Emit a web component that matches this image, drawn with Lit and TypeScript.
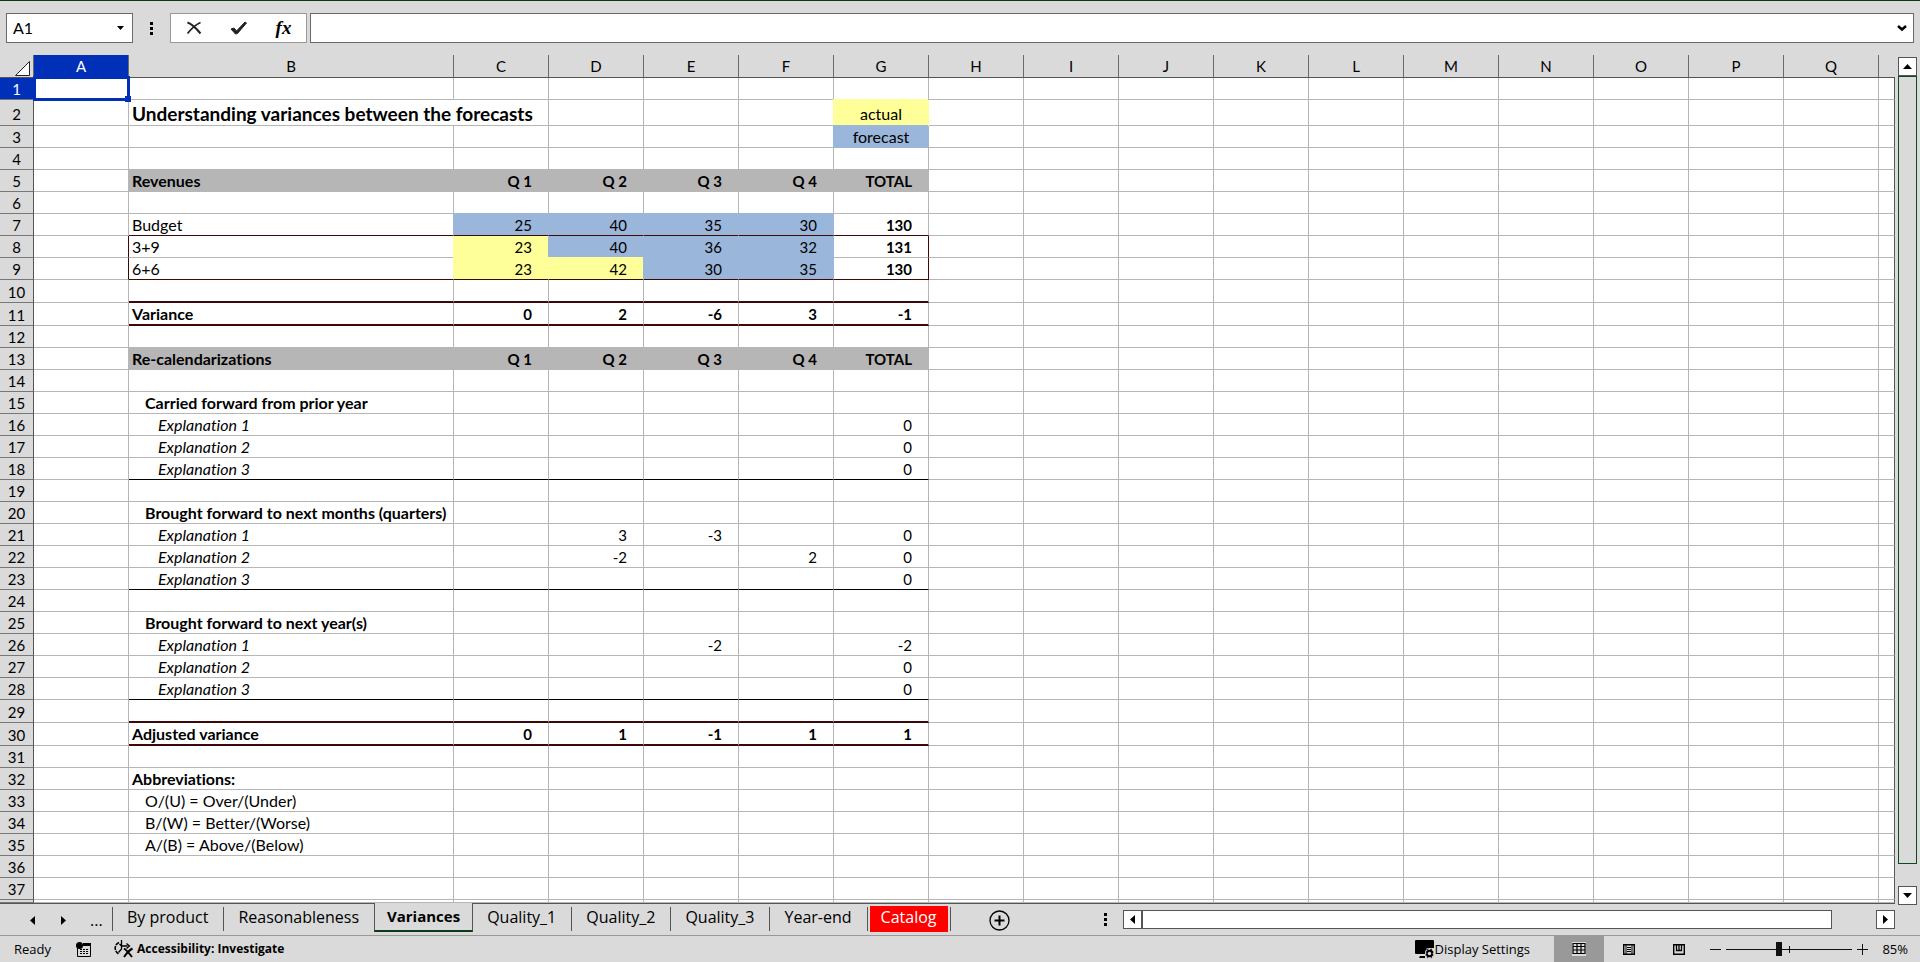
import { LitElement, html, css, svg, nothing } from "lit";
import { customElement, state } from "lit/decorators.js";
import { classMap } from "lit/directives/class-map.js";

type Kind = "head" | "bold" | "sub" | "item" | "title" | "text" | "plain";

interface Row {
  kind?: Kind;
  label?: string;
  /** Values of columns C to G. */
  values?: (string | number)[];
  /** One letter per column C to G: y = actual, b = forecast. */
  fill?: string;
  /** Rule drawn under columns B to G. */
  rule?: "frame" | "thin" | "thick";
  boxed?: boolean;
}

const QUARTERS = ["Q 1", "Q 2", "Q 3", "Q 4", "TOTAL"];

const ROWS: Row[] = [
  {},
  { kind: "title", label: "Understanding variances between the forecasts", values: ["", "", "", "", "actual"], fill: "    y" },
  { values: ["", "", "", "", "forecast"], fill: "    b" },
  {},
  { kind: "head", label: "Revenues", values: QUARTERS },
  {},
  { kind: "text", label: "Budget", values: [25, 40, 35, 30, 130], fill: "bbbb ", rule: "frame" },
  { kind: "text", label: "3+9", values: [23, 40, 36, 32, 131], fill: "ybbb ", boxed: true },
  { kind: "text", label: "6+6", values: [23, 42, 30, 35, 130], fill: "yybb ", boxed: true, rule: "frame" },
  { rule: "thick" },
  { kind: "bold", label: "Variance", values: [0, 2, -6, 3, -1], rule: "thick" },
  {},
  { kind: "head", label: "Re-calendarizations", values: QUARTERS },
  {},
  { kind: "sub", label: "Carried forward from prior year" },
  { kind: "item", label: "Explanation 1", values: ["", "", "", "", 0] },
  { kind: "item", label: "Explanation 2", values: ["", "", "", "", 0] },
  { kind: "item", label: "Explanation 3", values: ["", "", "", "", 0], rule: "thin" },
  {},
  { kind: "sub", label: "Brought forward to next months (quarters)" },
  { kind: "item", label: "Explanation 1", values: ["", 3, -3, "", 0] },
  { kind: "item", label: "Explanation 2", values: ["", -2, "", 2, 0] },
  { kind: "item", label: "Explanation 3", values: ["", "", "", "", 0], rule: "thin" },
  {},
  { kind: "sub", label: "Brought forward to next year(s)" },
  { kind: "item", label: "Explanation 1", values: ["", "", -2, "", -2] },
  { kind: "item", label: "Explanation 2", values: ["", "", "", "", 0] },
  { kind: "item", label: "Explanation 3", values: ["", "", "", "", 0], rule: "thin" },
  { rule: "thick" },
  { kind: "bold", label: "Adjusted variance", values: [0, 1, -1, 1, 1], rule: "thick" },
  {},
  { kind: "bold", label: "Abbreviations:" },
  { kind: "plain", label: "O/(U) = Over/(Under)" },
  { kind: "plain", label: "B/(W) = Better/(Worse)" },
  { kind: "plain", label: "A/(B) = Above/(Below)" },
  {},
  {},
];

const LETTERS = "ABCDEFGHIJKLMNOPQ".split("");
const REST = Array.from({ length: 11 });

const TABS = ["By product", "Reasonableness", "Variances", "Quality_1", "Quality_2", "Quality_3", "Year-end", "Catalog"];

const arrow = (d: string) => html`<svg width="9" height="9" viewBox="0 0 9 9" aria-hidden="true"><path d=${d} /></svg>`;
const UP = "M0 7h9L4.500 2z";
const DOWN = "M0 2h9L4.500 7z";
const LEFT = "M7 0v9L2 4.500z";
const RIGHT = "M2 0v9l5-4.500z";

@customElement("sheet-grid")
class SheetGrid extends LitElement {
  static styles = css`
    :host { display: block; flex: 1; min-width: 0; overflow: hidden; }
    .sheet {
      width: 100%; height: 100%; table-layout: fixed; border-collapse: separate; border-spacing: 0;
      font: 15px/20px "Lato", "Liberation Sans", sans-serif; color: #000; font-variant-ligatures: none;
    }
    .c-num { width: 34px; }
    .c-std { width: 95px; }
    .c-label { width: 325px; }
    .sheet td, .sheet th { box-sizing: border-box; padding: 1px 0 0; overflow: visible; white-space: nowrap; font-weight: 400; text-align: center; }
    .sheet thead tr { height: 23px; }
    .sheet thead th { padding: 0; border-right: 1px solid #6a6a6a; border-bottom: 1px solid #555; background: #dadada; }
    .sheet thead th.edge { border-right: 0; }
    .sheet thead th.corner { text-align: right; padding: 0; }
    .corner svg { display: block; margin: 4px 2px 0 auto; }
    .row { height: 22px; }
    .row.tall { height: 26px; }
    .row.ruled { height: 23px; }
    .row.rest { height: auto; }
    .row th { background: #dadada; border-right: 1px solid #555; border-bottom: 1px solid #777; }
    .row td { background: #fff; border-right: 1px solid #b6b6b6; border-bottom: 1px solid #b6b6b6; text-align: right; padding-right: 16px; }
    .row td.last { border-right-color: #555; }
    .row td.label { text-align: left; padding-right: 0; padding-left: 3px; font-size: 16px; }
    .row td.label.in1 { padding-left: 16px; }
    .row td.label.in2 { padding-left: 29px; font-style: italic; }
    .row td.strong { font-weight: 700; }
    .row td.label.title { font-size: 19px; font-weight: 700; }
    .row td.legend { text-align: center; padding-right: 0; font-size: 16px; }
    .row.tall th, .row.tall td { padding-top: 3px; }
    .row td.head { background: #b6b6b6; box-shadow: -1px -1px #b6b6b6; font-weight: 700; }
    .row td.yellow { background: #ffff99; border-color: #ffff99; box-shadow: -1px -1px #ffff99; }
    .row td.blue { background: #9ab6da; border-color: #9ab6da; box-shadow: -1px -1px #9ab6da; }
    .row td.under.yellow { box-shadow: -1px 0 #ffff99; }
    .row td.under.blue { box-shadow: -1px 0 #9ab6da; }
    .row td.frame { border-bottom-color: #3c0808; }
    .row td.thin { border-bottom-color: #000; }
    .row td.thick { border-bottom: 2px solid #3c0808; }
    .row td.side { border-right-color: #3c0808; }
    .sheet .active { background: #0030b8; color: #fff; }
    .row td.cursor { position: relative; }
    .cursor .ring { position: absolute; inset: -2px -2px -2px -1px; border: 3px solid #0030b8; }
    .cursor .ring::after { content: ""; position: absolute; right: -4px; bottom: -4px; width: 6px; height: 6px; background: #0030b8; }
  `;

  private renderRow(row: Row, i: number) {
    const n = i + 1;
    const values = row.values ?? ["", "", "", "", ""];
    const rule = row.rule ?? "";
    const title = row.kind === "title";
    const head = row.kind === "head";
    const labelClasses = {
      label: true,
      title,
      head,
      strong: row.kind === "bold" || row.kind === "sub",
      in1: row.kind === "sub" || row.kind === "plain",
      in2: row.kind === "item",
      frame: rule === "frame",
      thin: rule === "thin",
      thick: rule === "thick",
    };
    return html`
      <tr class=${classMap({ row: true, tall: title, ruled: n === 10 || n === 11 || n === 29 || n === 30 })}>
        <th scope="row" class=${n === 1 ? "active" : ""}>${n}</th>
        <td class=${classMap({ side: !!row.boxed, cursor: n === 1 })}>${n === 1 ? html`<span class="ring"></span>` : nothing}</td>
        <td class=${classMap(labelClasses)} colspan=${title ? 2 : 1}>${row.label ?? ""}</td>
        ${values.map((v, c) => {
          if (title && c === 0) return nothing;
          const f = row.fill?.[c];
          return html`<td class=${classMap({
            head,
            yellow: f === "y",
            blue: f === "b",
            under: n === 8,
            legend: n < 4,
            strong: row.kind === "bold" || (c === 4 && row.kind === "text"),
            side: !!row.boxed && c === 4,
            frame: rule === "frame",
            thin: rule === "thin",
            thick: rule === "thick",
          })}>${v}</td>`;
        })}
        ${REST.map((_, c) => html`<td class=${c === 10 ? "last" : ""}></td>`)}
      </tr>`;
  }

  render() {
    return html`
      <table class="sheet">
        <colgroup>
          <col class="c-num" /><col class="c-std" /><col class="c-label" />
          ${Array.from({ length: 15 }, () => html`<col class="c-std" />`)}
          <col />
        </colgroup>
        <thead>
          <tr>
            <th class="corner"><svg width="17" height="17" viewBox="0 0 17 17" aria-hidden="true"><path d="M15.500 1.500v14h-14z" fill="#fff" stroke="#222" /></svg></th>
            ${LETTERS.map((l) => html`<th scope="col" class=${l === "A" ? "active" : ""}>${l}</th>`)}
            <th class="edge"></th>
          </tr>
        </thead>
        <tbody>
          ${ROWS.map((r, i) => this.renderRow(r, i))}
          <tr class="row rest">
            <th></th><td></td><td></td>
            ${Array.from({ length: 16 }, (_, c) => html`<td class=${c === 15 ? "last" : ""}></td>`)}
          </tr>
        </tbody>
      </table>`;
  }
}

@customElement("app-root")
class AppRoot extends LitElement {
  @state() private tab = "Variances";

  static styles = css`
    :host {
      display: flex; flex-direction: column; height: 100vh; box-sizing: border-box; overflow: hidden;
      border-top: 1px solid #0c3a18; background: #dadada; color: #000;
      font: 13px/18px "Open Sans", "Noto Sans", sans-serif;
    }
    button { font: inherit; color: inherit; background: none; border: 0; padding: 0; margin: 0; display: flex; align-items: center; justify-content: center; }
    input { font: inherit; color: inherit; }
    svg { display: block; flex: none; }

    .formula { display: flex; height: 30px; padding: 12px 6px; gap: 3px; }
    .field { display: flex; box-sizing: border-box; background: #fff; border: 1px solid #6a6a6a; }
    .field input { flex: 1; min-width: 0; border: 0; outline: 0; background: none; padding: 0 6px; font: 16px/20px "Lato", sans-serif; }
    .field button { width: 22px; }
    .name { width: 127px; }
    .name button { width: 24px; }
    .bar { flex: 1; }
    .grip { display: flex; align-items: center; justify-content: center; width: 31px; }
    .tools { display: flex; box-sizing: border-box; width: 137px; background: #fff; border: 1px solid #999; }
    .tools button { flex: 1; }
    .fx { font: italic 700 19px/20px "Liberation Serif", serif; }

    .main { display: flex; flex: 1; min-height: 0; gap: 3px; padding-right: 3px; }
    .vscroll { display: flex; flex-direction: column; width: 19px; padding-top: 2px; }
    .arrow { box-sizing: border-box; width: 19px; height: 19px; background: #fff; border: 1px solid #555; }
    .vthumb { box-sizing: border-box; flex: 1; border: 1px solid #0e4a1e; }
    .vscroll .arrow.end { margin: 22px 0 -2px; }

    .tabbar { display: flex; box-sizing: border-box; height: 32px; margin-right: 25px; border-top: 1px solid #555; font-size: 16px; line-height: 24px; }
    .nav { display: flex; width: 112px; padding-left: 28px; box-sizing: border-box; align-items: center; gap: 22px; }
    .nav button { padding-top: 2px; }
    .tabs { display: flex; }
    .tab { box-sizing: border-box; height: 24px; margin-top: 3px; padding: 0 15px 4px 14px; border-left: 1px solid #555; }
    .tab.on { height: 29px; margin-top: -1px; padding: 0 12px 2px; font-weight: 700; font-size: 15px; border-right: 1px solid #555; border-bottom: 2px solid #0c3a18; background: #dadada; }
    .tab.on + .tab { border-left: 0; }
    .tab.red { padding: 0 2px; border-right: 1px solid #555; color: #fff; }
    .tab.red .chip { height: 26px; line-height: 22px; padding: 0 11px; background: #f00; }
    .add { margin: 2px 0 0 38px; align-self: center; }
    .hscroll { display: flex; width: 42%; margin-left: auto; padding-top: 6px; }
    .dots { display: flex; width: 24px; height: 19px; padding-right: 12px; box-sizing: border-box; align-items: center; justify-content: center; }
    .hthumb { box-sizing: border-box; flex: 1; height: 19px; background: #fff; border: 1px solid #555; }
    .hscroll .arrow.end { margin-left: 44px; }

    .status { display: flex; box-sizing: border-box; height: 27px; border-top: 1px solid #999; padding: 0 12px 0 14px; align-items: stretch; }
    .status > * { align-self: center; }
    .macro { margin-left: 25px; }
    .access { margin-left: 23px; font-weight: 700; font-size: 12px; gap: 3px; }
    .display { margin-left: auto; gap: 1px; }
    .view { align-self: stretch; width: 50px; }
    .view.on { background: #999; margin-left: 24px; }
    .minus { margin-left: 6px; }
    .zoom { position: relative; display: flex; margin: 0 5px; width: 126px; height: 18px; background: linear-gradient(#111, #111) 0 9px / 100% 1px no-repeat, linear-gradient(#111, #111) 50% 6px / 1px 7px no-repeat; }
    .zoom input { appearance: none; -webkit-appearance: none; width: 100%; height: 18px; margin: 0; background: none; }
    .zoom input::-webkit-slider-thumb { -webkit-appearance: none; width: 6px; height: 14px; background: #111; border-radius: 0; }
    .pct { width: 40px; justify-content: flex-end; }
  `;

  private dots() {
    return html`<svg width="3" height="13" viewBox="0 0 3 13" aria-hidden="true"><path d="M0 0h3v3H0zM0 5h3v3H0zM0 10h3v3H0z" /></svg>`;
  }

  render() {
    return html`
      <div class="formula">
        <div class="field name">
          <input aria-label="Name box" value="A1" />
          <button aria-label="Open name list"><svg width="7" height="4" viewBox="0 0 7 4"><path d="M0 0h7L3.500 4z" /></svg></button>
        </div>
        <span class="grip">${this.dots()}</span>
        <div class="tools">
          <button aria-label="Cancel"><svg width="16" height="14" viewBox="0 0 16 14" fill="none" stroke="#222"><path d="M1.500 1.500C6 3 10 7 14.500 12.500" stroke-width="2" /><path d="M14.500 1.500C9 4 5 8 1.500 12.500" stroke-width="1.700" /></svg></button>
          <button aria-label="Enter"><svg width="17" height="14" viewBox="0 0 17 14"><path d="M1 8l3-1 2.500 3L15 1l1.500 1L7.500 12.500 5.500 13z" fill="#222" stroke="#222" /></svg></button>
          <button class="fx" aria-label="Insert function">fx</button>
        </div>
        <div class="field bar">
          <input aria-label="Formula bar" />
          <button aria-label="Expand formula bar"><svg width="10" height="7" viewBox="0 0 10 7"><path d="M1 1l4 3.500L9 1" fill="none" stroke="#000" stroke-width="2.500" /></svg></button>
        </div>
      </div>

      <div class="main">
        <sheet-grid></sheet-grid>
        <div class="vscroll">
          <button class="arrow" aria-label="Scroll up">${arrow(UP)}</button>
          <div class="vthumb"></div>
          <button class="arrow end" aria-label="Scroll down">${arrow(DOWN)}</button>
        </div>
      </div>

      <div class="tabbar">
        <div class="nav">
          <button aria-label="Previous sheet">${arrow(LEFT)}</button>
          <button aria-label="Next sheet">${arrow(RIGHT)}</button>
          <span>...</span>
        </div>
        <div class="tabs" role="tablist">
          ${TABS.map((t) => html`
            <button role="tab" aria-selected=${t === this.tab ? "true" : "false"}
              class=${classMap({ tab: true, on: t === this.tab, red: t === "Catalog" })}
              @click=${() => (this.tab = t)}>${t === "Catalog" ? html`<span class="chip">${t}</span>` : t}</button>`)}
        </div>
        <button class="add" aria-label="New sheet"><svg width="21" height="21" viewBox="0 0 21 21" fill="none" stroke="#000"><circle cx="10.500" cy="10.500" r="9.500" stroke-width="1.300" /><path d="M10.500 5.500v10M5.500 10.500h10" stroke-width="2" /></svg></button>
        <div class="hscroll">
          <span class="dots">${this.dots()}</span>
          <button class="arrow" aria-label="Scroll left">${arrow(LEFT)}</button>
          <div class="hthumb"></div>
          <button class="arrow end" aria-label="Scroll right">${arrow(RIGHT)}</button>
        </div>
      </div>

      <div class="status">
        <span>Ready</span>
        <button class="macro" aria-label="Record macro"><svg width="15" height="15" viewBox="0 0 15 15"><path d="M7 1h8v3H7z" /><path d="M1.500 5v9.500h13V3" fill="none" stroke="#000" /><circle cx="3.500" cy="3.500" r="3.500" /><path d="M4 7.500h2M7 7.500h2M10 7.500h2M4 9.500h2M7 9.500h2M10 9.500h2M4 11.500h2M7 11.500h2M10 11.500h2" stroke="#000" /></svg></button>
        <button class="access"><svg width="20" height="18" viewBox="0 0 20 18" fill="none" stroke="#000"><path d="M5 2.500C0 4.500 0 11 4.500 14" stroke-width="1.600" stroke-dasharray="4 1" /><path d="M7.500 0v6M5.500 4l2 2h6M12.500 3.500l3 2.500-3 2.500M7.500 6v3L4.500 12.500" stroke-width="1.300" /><path d="M10 8.500c3 2 5 4.500 8 8.500M18.500 8.500c-4 2-6 5-8.500 8.500" stroke-width="2" /></svg>Accessibility: Investigate</button>
        <button class="display"><svg width="19" height="19" viewBox="0 0 19 19"><path d="M1 0h17q1 0 1 1v7h-5l-4 3v3H1q-1 0-1-1V1q0-1 1-1zM5 16h5v2H4z" /><path d="M12 8l1.500 1.500h1.500L16.500 8l1 2.500L19 12l-1 1.500 1 2-1.500.5-.5 2.500-1.500-1h-2l-1.500 1-.5-2.500L10 15.500l1-2-.5-2 1.500-1z" stroke="#dadada" stroke-width=".6" /><circle cx="14.500" cy="13.500" r="1.700" fill="#dadada" /></svg>Display Settings</button>
        <button class="view on" aria-label="Normal view" aria-pressed="true"><svg width="14" height="14" viewBox="0 0 14 14"><path d="M0 0h14v14H0z" fill="#dadada" /><path d="M1 1.500h12v10H1zM1 4.500h12M1 8h12M5 1.500v10M9 1.500v10" fill="none" stroke="#000" stroke-width="1.200" /></svg></button>
        <button class="view" aria-label="Page layout view"><svg width="12" height="11" viewBox="0 0 12 11" fill="none" stroke="#000"><path d="M.7.7h10.600v9.600H.7z" stroke-width="1.400" /><path d="M3 1v9M9 1v9M4 3.500h4M4 5.500h4M4 7.500h4" /></svg></button>
        <button class="view" aria-label="Page break preview"><svg width="12" height="11" viewBox="0 0 12 11" fill="none" stroke="#000"><path d="M.7.7h10.600v9.600H.7z" stroke-width="1.400" /><path d="M3.500 1v5.500h5V1M6 1v5.500" stroke-width="1.300" /></svg></button>
        <button class="minus" aria-label="Zoom out"><svg width="11" height="11" viewBox="0 0 11 11"><path d="M0 5.500h11" stroke="#111" /></svg></button>
        <span class="zoom"><input type="range" aria-label="Zoom" min="0" max="100" value="42" /></span>
        <button aria-label="Zoom in"><svg width="11" height="11" viewBox="0 0 11 11"><path d="M0 5.500h11M5.500 0v11" stroke="#111" /></svg></button>
        <button class="pct" aria-label="Zoom level, 85%">85%</button>
      </div>`;
  }
}
